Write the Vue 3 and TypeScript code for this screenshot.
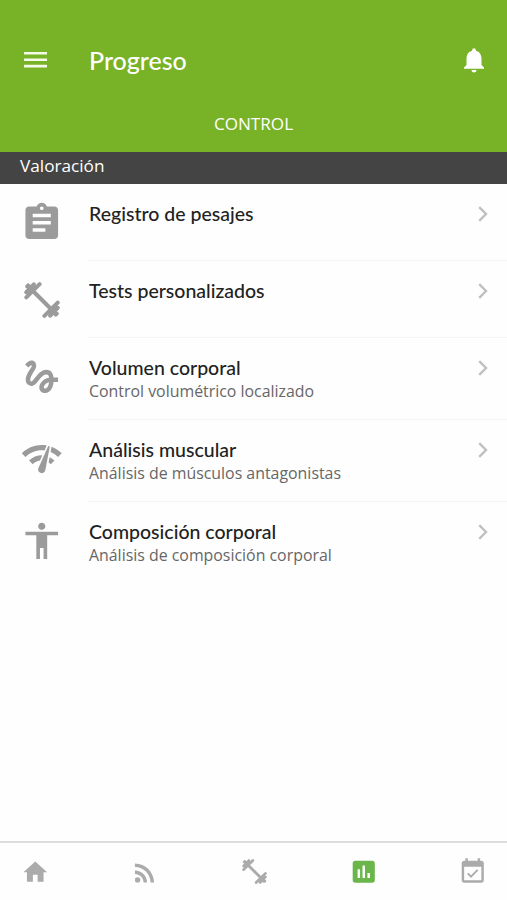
<script setup lang="ts">
interface Row {
  title: string
  subtitle?: string
  icon: string
}

const icons: Record<string, string> = {
  clipboard:
    'M19 3h-4.18C14.4 1.84 13.3 1 12 1c-1.3 0-2.4.84-2.82 2H5c-1.1 0-2 .9-2 2v14c0 1.1.9 2 2 2h14c1.1 0 2-.9 2-2V5c0-1.1-.9-2-2-2zm-7 0c.55 0 1 .45 1 1s-.45 1-1 1-1-.45-1-1 .45-1 1-1zm2 14H7v-2h7v2zm3-4H7v-2h10v2zm0-4H7V7h10v2z',
  gesture:
    'M4.59 6.89c.7-.71 1.4-1.35 1.71-1.22.5.2 0 1.03-.3 1.52-.25.42-2.86 3.89-2.86 6.31 0 1.28.48 2.34 1.34 2.98.75.56 1.74.73 2.64.46 1.07-.31 1.95-1.4 3.06-2.77 1.21-1.49 2.83-3.44 4.08-3.44 1.63 0 1.65 1.01 1.76 1.79-3.78.64-5.38 3.67-5.38 5.37 0 1.7 1.44 3.09 3.21 3.09 1.63 0 4.29-1.33 4.69-6.1H21v-2.5h-2.47c-.15-1.65-1.09-4.2-4.03-4.2-2.25 0-4.18 1.91-4.94 2.84-.58.73-2.06 2.48-2.29 2.72-.25.3-.68.84-1.11.84-.45 0-.72-.83-.36-1.92.35-1.09 1.4-2.86 1.85-3.52.78-1.14 1.3-1.92 1.3-3.28C8.95 3.69 7.31 3 6.44 3 5.12 3 3.97 4 3.72 4.25c-.36.36-.66.66-.88.93l1.75 1.71zm9.29 11.66c-.31 0-.74-.26-.74-.72 0-.6.73-2.2 2.87-2.76-.3 2.69-1.43 3.48-2.13 3.48z',
  gauge:
    'M15.9 5c-.17 0-.32.09-.41.23l-.07.15-5.18 11.65c-.16.29-.26.61-.26.96 0 1.11.9 2.01 2.01 2.01.96 0 1.77-.68 1.96-1.59l.01-.03L16.4 5.5c0-.28-.22-.5-.5-.5zM1 9l2 2c2.88-2.88 6.79-4.08 10.53-3.62l1.19-2.68C9.89 3.84 4.74 5.27 1 9zm20 2l2-2c-1.64-1.64-3.55-2.82-5.59-3.57l-.53 2.82c1.5.62 2.9 1.53 4.12 2.75zm-4 4l2-2c-.8-.8-1.7-1.42-2.66-1.89l-.55 2.92c.42.27.83.59 1.21.97zM5 13l2 2c1.13-1.13 2.56-1.79 4.03-2l1.28-2.88c-2.63-.08-5.3.87-7.31 2.88z',
  body: 'M12 2c1.1 0 2 .9 2 2s-.9 2-2 2-2-.9-2-2 .9-2 2-2zm9 7h-6v13h-2v-6h-2v6H9V9H3V7h18v2z',
  home: 'M10 20v-6h4v6h5v-8h3L12 3 2 12h3v8z',
  feed: 'M6.18 15.64a2.18 2.18 0 1 1 0 4.36 2.18 2.18 0 0 1 0-4.36zM4 4.44v2.83c7.03 0 12.73 5.7 12.73 12.73h2.83c0-8.59-6.97-15.56-15.56-15.56zm0 5.66v2.83c3.9 0 7.07 3.17 7.07 7.07h2.83c0-5.47-4.43-9.9-9.9-9.9z',
  chart:
    'M19 3H5c-1.1 0-2 .9-2 2v14c0 1.1.9 2 2 2h14c1.1 0 2-.9 2-2V5c0-1.1-.9-2-2-2zM9 17H7v-7h2v7zm4 0h-2V7h2v10zm4 0h-2v-4h2v4z',
  calendar:
    'M16.53 11.06L15.47 10l-4.88 4.88-2.12-2.12-1.06 1.06L10.59 17l5.94-5.94zM19 3h-1V1h-2v2H8V1H6v2H5c-1.11 0-1.99.9-1.99 2L3 19c0 1.1.89 2 2 2h14c1.1 0 2-.9 2-2V5c0-1.1-.9-2-2-2zm0 16H5V8h14v11z',
}

const dumbbell =
  'M10 10l16 16M2.3 15.3L15.6 2.2M2.3 10.2L9.8 2.3M3.2 4.4l1-1M5 5l5 5M5 10.5l5.5-5.5M33.7 20.7L20.4 33.8M33.7 25.8l-7.5 7.9M32.8 31.6l-1 1M31 31l-5-5M31 25.5L25.5 31'

const rows: Row[] = [
  { title: 'Registro de pesajes', icon: 'clipboard' },
  { title: 'Tests personalizados', icon: 'dumbbell' },
  { title: 'Volumen corporal', subtitle: 'Control volumétrico localizado', icon: 'gesture' },
  { title: 'Análisis muscular', subtitle: 'Análisis de músculos antagonistas', icon: 'gauge' },
  { title: 'Composición corporal', subtitle: 'Análisis de composición corporal', icon: 'body' },
]

const tabs: string[] = ['home', 'feed', 'dumbbell', 'chart', 'calendar']
const activeTab = 'chart'
</script>

<template>
  <div class="screen">
    <header class="header">
      <div class="toolbar">
        <svg class="menu" viewBox="0 0 23 16"><path d="M0 0h23v2.6H0zM0 6.4h23V9H0zM0 12.8h23v2.6H0z" /></svg>
        <h1 class="title">Progreso</h1>
        <svg class="bell" viewBox="0 0 24 24">
          <path d="M12 22c1.1 0 2-.9 2-2h-4c0 1.1.89 2 2 2zm6-6v-5c0-3.07-1.64-5.64-4.5-6.32V4c0-.83-.67-1.5-1.5-1.5s-1.5.67-1.5 1.5v.68C7.63 5.36 6 7.92 6 11v5l-2 2v1h16v-1l-2-2z" />
        </svg>
      </div>
      <div class="segment">CONTROL</div>
    </header>
    <div class="section">Valoración</div>
    <main class="list">
      <div v-for="row in rows" :key="row.title" class="row" :class="{ tall: row.subtitle }">
        <div class="row-icon">
          <svg v-if="row.icon === 'dumbbell'" class="weights" viewBox="0 0 36 36"><path :d="dumbbell" /></svg>
          <svg v-else class="glyph" viewBox="0 0 24 24"><path :d="icons[row.icon]" /></svg>
        </div>
        <div class="row-body">
          <div class="labels">
            <h2>{{ row.title }}</h2>
            <p v-if="row.subtitle">{{ row.subtitle }}</p>
          </div>
          <svg class="chevron" viewBox="0 0 10 16"><path d="M1.2 1.2L8 8l-6.8 6.8" /></svg>
        </div>
      </div>
    </main>
    <nav class="tabs">
      <div v-for="tab in tabs" :key="tab" class="tab" :class="['tab-' + tab, { active: tab === activeTab }]">
        <svg v-if="tab === 'dumbbell'" class="weights" viewBox="0 0 36 36"><path :d="dumbbell" /></svg>
        <svg v-else class="glyph" viewBox="0 0 24 24"><path :d="icons[tab]" /></svg>
      </div>
    </nav>
  </div>
</template>

<style>
body {
  margin: 0;
  background: #fefefe;
}
</style>

<style scoped>
.screen {
  display: flex;
  flex-direction: column;
  height: 900px;
  overflow: hidden;
  background: #fefefe;
  font-family: 'Open Sans', 'Noto Sans', sans-serif;
}
.header {
  height: 152px;
  flex: none;
  background: #78b227;
  color: #fff;
}
.toolbar {
  display: flex;
  align-items: center;
  height: 56px;
  padding: 32px 18px 0 24px;
}
.menu {
  width: 23px;
  height: 16px;
  fill: #f4faea;
}
.title {
  flex: 1;
  margin: 0 0 0 42px;
  font: 500 25px/30px Lato, sans-serif;
}
.bell {
  width: 30px;
  height: 30px;
  fill: #fff;
}
.segment {
  padding-top: 24px;
  text-align: center;
  font-size: 17.1px;
  line-height: 24px;
}
.section {
  flex: none;
  box-sizing: border-box;
  height: 32px;
  padding-left: 20px;
  background: #444;
  color: #fff;
  font-size: 17.2px;
  line-height: 27px;
}
.list {
  flex: 1;
}
.row {
  display: flex;
  height: 77px;
}
.row.tall {
  height: 82px;
}
.row-icon {
  display: flex;
  align-items: center;
  justify-content: center;
  width: 88px;
  box-sizing: border-box;
  padding-right: 5px;
  fill: #9b9b9b;
  stroke: #9b9b9b;
}
.row.tall .row-icon {
  padding-bottom: 5px;
}
.glyph {
  stroke: none;
}
.row-icon .glyph {
  width: 43.5px;
  height: 43.5px;
}
.weights {
  width: 36px;
  height: 36px;
  fill: none;
  stroke-width: 4;
  stroke-linecap: round;
}
.row-body {
  display: flex;
  flex: 1;
  justify-content: space-between;
  box-sizing: border-box;
  padding: 18px 19px 0 1px;
  border-bottom: 1px solid #f4f4f4;
}
.row:last-child .row-body {
  border-bottom: 0;
}
h2 {
  margin: 0;
  color: #222;
  font: 500 19.5px/24px Lato, sans-serif;
}
p {
  margin: 0;
  color: #666;
  font-size: 15.9px;
  line-height: 22px;
}
.chevron {
  width: 10px;
  height: 16px;
  margin-top: 4px;
  fill: none;
  stroke: #c0c0c0;
  stroke-width: 2.4;
}
.tabs {
  display: flex;
  flex: none;
  justify-content: space-between;
  box-sizing: border-box;
  height: 59px;
  padding: 0 19px 0 20px;
  border-top: 2px solid #dcdcdc;
}
.tab {
  display: flex;
  align-items: center;
  justify-content: center;
  width: 30px;
  fill: #ababab;
  stroke: #ababab;
}
.tab .glyph {
  width: 29.5px;
  height: 29.5px;
}
.tab-home .glyph {
  width: 28.5px;
  height: 28.5px;
}
.tab .weights {
  width: 25px;
  height: 25px;
}
.tab.active {
  fill: #6ab64b;
}
.tab-home,
.tab-feed {
  padding-top: 2px;
}
</style>
